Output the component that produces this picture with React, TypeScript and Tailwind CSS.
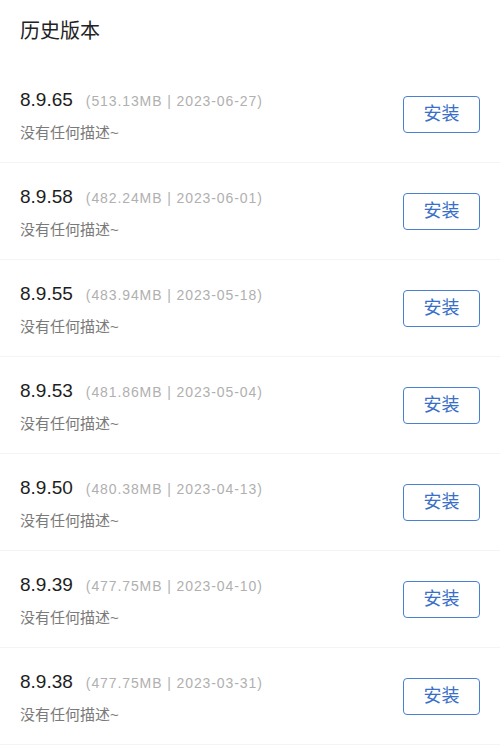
import React from "react";

const versions = [
  { v: "8.9.65", size: "513.13MB", date: "2023-06-27" },
  { v: "8.9.58", size: "482.24MB", date: "2023-06-01" },
  { v: "8.9.55", size: "483.94MB", date: "2023-05-18" },
  { v: "8.9.53", size: "481.86MB", date: "2023-05-04" },
  { v: "8.9.50", size: "480.38MB", date: "2023-04-13" },
  { v: "8.9.39", size: "477.75MB", date: "2023-04-10" },
  { v: "8.9.38", size: "477.75MB", date: "2023-03-31" },
];

export default function App() {
  return (
    <div
      className="w-[500px] h-[750px] overflow-hidden bg-white"
      style={{ fontFamily: '"Liberation Sans", "Noto Sans CJK SC", sans-serif' }}
    >
      {/* Header */}
      <div className="h-[66px] px-5 flex items-start pt-[17px]">
        <h1 className="text-[20px] leading-[28px] text-[#222222] font-normal">历史版本</h1>
      </div>

      {/* Version list */}
      <div>
        {versions.map((item) => (
          <div
            key={item.v}
            className="h-[97px] border-b border-[#f4f4f4] pl-5 pr-5 flex items-center justify-between"
          >
            <div className="flex flex-col pt-[1px]">
              <div className="flex items-baseline gap-[13px] leading-none">
                <span className="text-[19px] text-[#1e1e1e]">{item.v}</span>
                <span className="text-[14px] tracking-[0.9px] text-[#b0b0b0]">
                  ({item.size} | {item.date})
                </span>
              </div>
              <div className="mt-[16px] text-[15px] leading-none text-[#7a7a7a]">没有任何描述~</div>
            </div>
            <button className="w-[77px] h-[37px] rounded-[4px] border border-[#4a80d2] text-[#3a6fc8] text-[18px] leading-none flex items-center justify-center">
              安装
            </button>
          </div>
        ))}
      </div>
    </div>
  );
}
